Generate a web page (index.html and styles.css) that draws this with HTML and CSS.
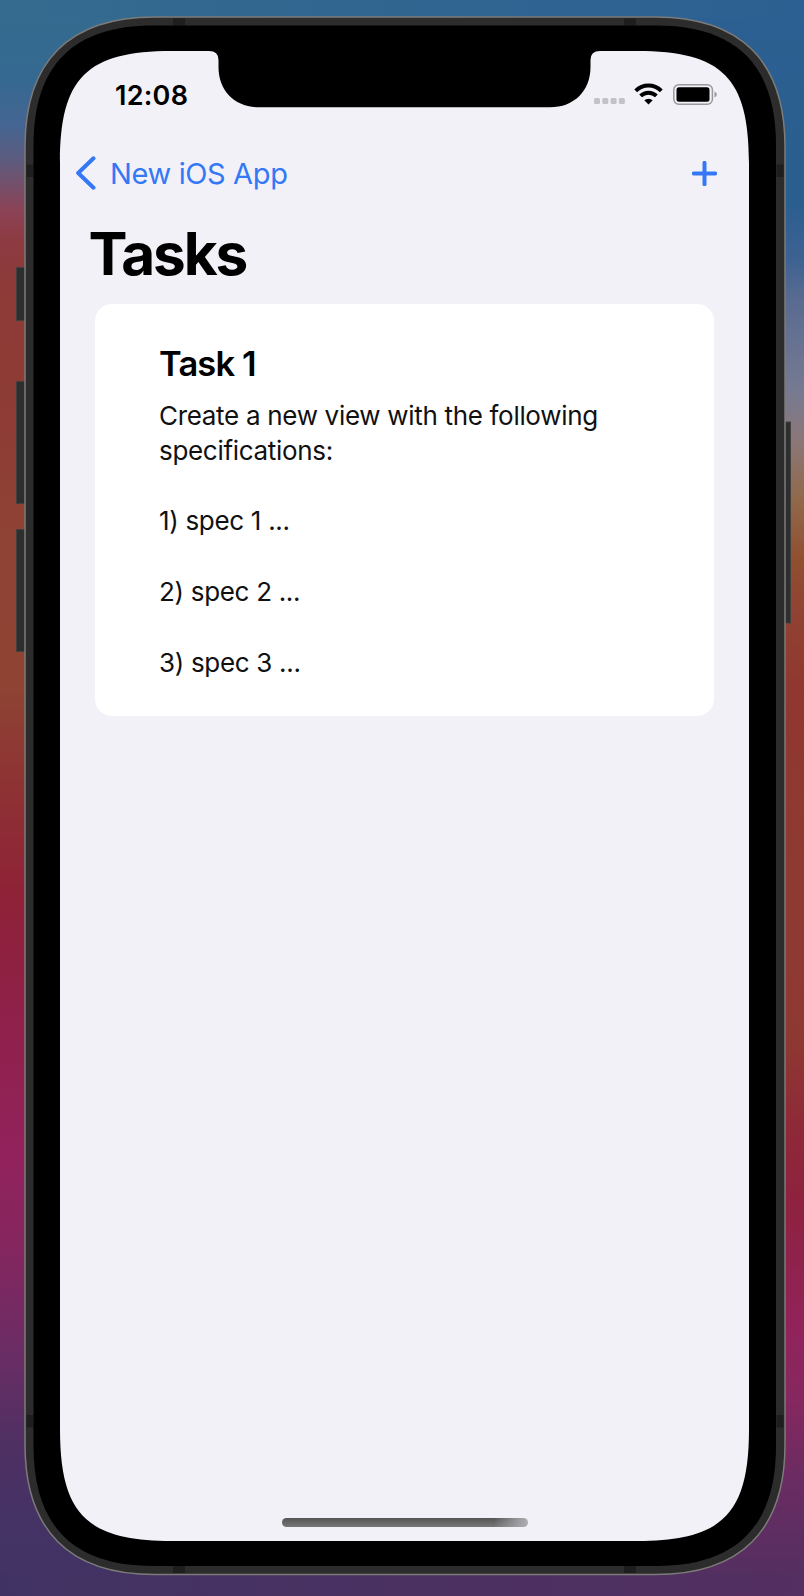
FILE: index.html
```html
<!DOCTYPE html>
<html lang="en">
<head>
<meta charset="utf-8">
<title>Tasks</title>
<link rel="stylesheet" href="styles.css">
</head>
<body>
<div class="desktop">
  <svg class="device" viewBox="0 0 804 1596" aria-hidden="true">
    <g class="button">
      <rect x="16.5" y="267.5" width="9" height="53"/>
      <rect x="16.5" y="381.5" width="9" height="122"/>
      <rect x="16.5" y="529.5" width="9" height="122"/>
      <rect x="785" y="422" width="5.5" height="201"/>
    </g>
    <path class="rim" d="M25 147C25 61.200 69.200 17 155 17H655C740.800 17 785 61.200 785 147V1444.500C785 1530.300 740.800 1574.500 655 1574.500H155C69.200 1574.500 25 1530.300 25 1444.500Z"/>
    <g class="antenna">
      <rect x="173" y="18.500" width="12" height="7"/><rect x="624" y="18.500" width="12" height="7"/>
      <rect x="173" y="1566" width="12" height="7"/><rect x="624" y="1566" width="12" height="7"/>
      <rect x="26.500" y="164.500" width="7" height="12.500"/><rect x="776.500" y="164.500" width="7" height="12.500"/>
      <rect x="26.500" y="1415" width="7" height="12.500"/><rect x="776.500" y="1415" width="7" height="12.500"/>
    </g>
    <path class="bezel" d="M33.500 145.500C33.500 65.200 73.200 25.500 153.500 25.500H656C736.300 25.500 776 65.200 776 145.500V1446C776 1526.300 736.300 1566 656 1566H153.500C73.200 1566 33.500 1526.300 33.500 1446Z"/>
    <path class="screen-glass" d="M60 163C60 77.700 86.700 51 172 51H209Q218.500 51 218.500 60V67C218.500 91 235 107.300 259 107.300H550C574 107.300 590.500 91 590.500 67V60Q590.500 51 600 51H637C722.300 51 749 77.700 749 163V1429C749 1514.300 722.300 1541 637 1541H172C86.700 1541 60 1514.300 60 1429Z"/>
  </svg>
  <main class="screen">
    <header class="status">
      <span class="time">12:08</span>
      <span class="signals">
        <svg width="31" height="7" viewBox="0 0 31 7" fill="#c3c2c8"><rect x="0" y="0" width="6" height="6" rx="1.500"/><rect x="8.300" y="0" width="6" height="6" rx="1.500"/><rect x="16.600" y="0" width="6" height="6" rx="1.500"/><rect x="24.900" y="0" width="6" height="6" rx="1.500"/></svg>
        <svg class="wifi" width="29" height="22" viewBox="0 0 29 22"><path class="wifi-arc" d="M1.700 7.800A18.200 18.200 0 0 1 27.300 7.800M6.600 12.900A11.300 11.300 0 0 1 22.400 12.900"/><path d="M14.500 21.400L10.300 17.300A6.200 6.200 0 0 1 18.700 17.300Z"/></svg>
        <svg class="battery" width="44" height="21" viewBox="0 0 44 21"><rect x=".8" y=".8" width="38.600" height="19.400" rx="5" fill="none" stroke="#99989c" stroke-width="1.500"/><rect x="3.500" y="3.300" width="33" height="14.400" rx="2.500"/><path d="M41.500 7.500Q43.800 8.500 43.800 10.500T41.500 13.500Z" fill="#99989c"/></svg>
      </span>
    </header>
    <nav class="nav">
      <a class="back"><svg width="20" height="34" viewBox="0 0 20 34"><path d="M17.500 2.300L2.200 17L17.500 31.700"/></svg><span>New iOS App</span></a>
      <svg class="add" width="25" height="25" viewBox="0 0 25 25"><path d="M12.500 1.800V23.200M1.800 12.500H23.200"/></svg>
    </nav>
    <h1 class="title">Tasks</h1>
    <section class="card">
      <h2 class="task-name">Task 1</h2>
      <p class="task-body">Create a new view with the following specifications:

<span class="spec">1) spec 1 ...</span>

<span class="spec">2) spec 2 ...</span>

<span class="spec">3) spec 3 ...</span></p>
    </section>
    <div class="home-bar"></div>
  </main>
</div>
</body>
</html>
```
FILE: styles.css
```css
* { box-sizing: border-box; }
body { margin: 0; font-family: Inter, "Liberation Sans", sans-serif; color: #000; }
.desktop {
  position: relative;
  width: 804px;
  height: 1596px;
  padding: 51px 55px 55px 60px;
  overflow: hidden;
  background:
    linear-gradient(90deg, #356b8f, #2c6092) 0 0 / 100% 18px no-repeat,
    linear-gradient(90deg, #403363, #4a3162 50%, #542f61) 0 100% / 100% 24px no-repeat,
    linear-gradient(180deg, #356b8f 0, #356991 80px, #446591 125px, #5d5b7e 160px, #8b4356 210px, #8d3b42 240px, #8e3a38 290px, #8e3c35 420px, #8f4334 540px, #8e4333 690px, #8e3034 800px, #8e2137 900px, #8f2148 1000px, #91225c 1160px, #84265f 1250px, #6b2d64 1350px, #503063 1440px, #463265 1510px, #403363 1580px) 0 0 / 50% 100% no-repeat,
    linear-gradient(180deg, #2c6092 0, #295e8f 200px, #3e6292 260px, #596b91 300px, #767a91 390px, #8b7779 440px, #90694a 500px, #904f30 560px, #904332 610px, #90372f 690px, #8e3a31 880px, #8e3832 1040px, #8e2938 1130px, #8e223f 1200px, #91235b 1330px, #85285f 1400px, #6a2c62 1480px, #5a2e61 1550px, #542f61 1580px) 100% 0 / 50% 100% no-repeat;
}
.device { position: absolute; inset: 0; width: 804px; height: 1596px; }
.button { fill: #2d2e2e; stroke: #44403f; stroke-width: 1; }
.rim { fill: #2c2c2c; stroke: #7c7b79; stroke-width: 1.5; }
.antenna { fill: #1e1e1e; }
.bezel { fill: #000; }
.screen-glass { fill: #f2f1f7; }
.screen { position: relative; width: 689px; height: 1490px; display: flex; flex-direction: column; }
.status { height: 87px; padding: 0 32.500px 0 55px; display: flex; justify-content: space-between; }
.time { margin-top: 28px; font-size: 27px; line-height: 34px; font-weight: 600; letter-spacing: 0.25px; }
.signals { display: flex; height: 22px; margin-top: 32px; align-items: flex-end; }
.wifi { margin-left: 9px; }
.wifi-arc { fill: none; stroke: #000; stroke-width: 4; }
.battery { margin-left: 10px; align-self: flex-start; margin-top: 1px; }
.nav { height: 70px; padding: 0 32px 0 15.500px; display: flex; align-items: center; justify-content: space-between; }
.back { display: flex; align-items: center; gap: 14.500px; color: #3478f6; font-size: 29px; line-height: 36px; letter-spacing: -0.370px; }
.back span { padding-top: 1px; }
.back path, .add path { fill: none; stroke: #3478f6; stroke-width: 4; stroke-linecap: round; stroke-linejoin: round; }
.title { margin: 10.500px 0 0 28.500px; font-size: 58.500px; line-height: 70px; font-weight: 700; letter-spacing: -2.100px; }
.card { margin: 15px 35.500px 0 35px; height: 412.500px; padding: 40.500px 50px 0 64px; border-radius: 17px; background: #fff; }
.task-name { margin: 0; font-size: 34.500px; line-height: 40px; font-weight: 600; letter-spacing: -0.850px; }
.task-body { max-width: 460px; margin: 13.500px 0 0; font-size: 26px; line-height: 35.300px; letter-spacing: -0.310px; white-space: pre-wrap; color: #111; }
.home-bar { width: 246px; height: 9px; margin: auto auto 14px 222px; border-radius: 5px; background: linear-gradient(90deg, transparent 86%, #b0afb3 100%), linear-gradient(180deg, #555, #777); }
```
